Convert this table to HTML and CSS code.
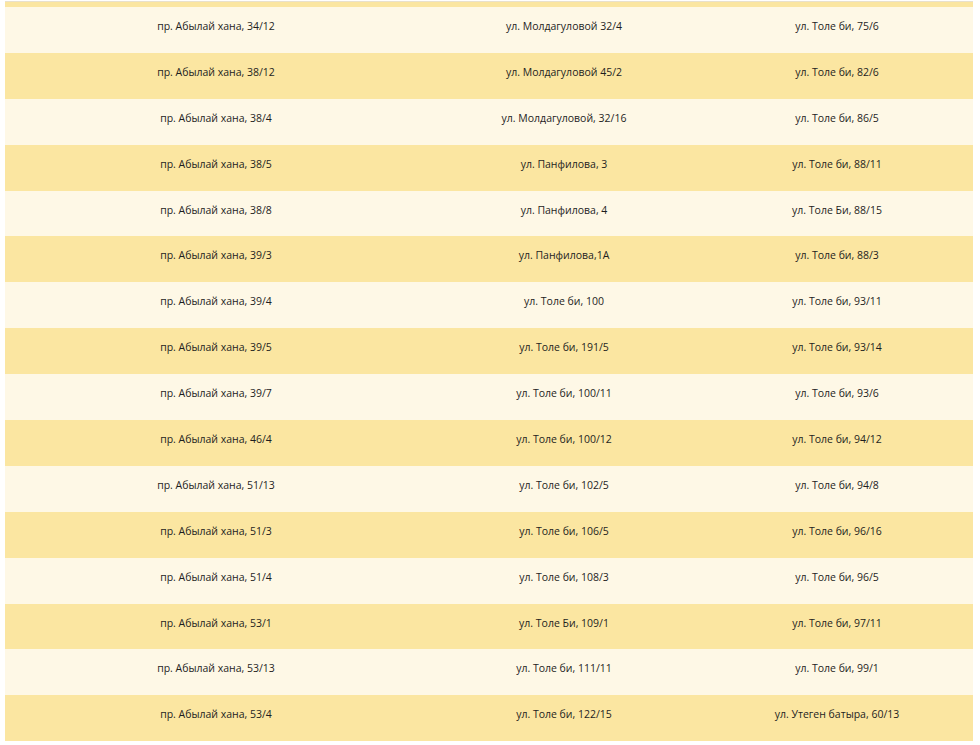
FILE: index.html
```html
<!DOCTYPE html>
<html lang="ru">
<head>
<meta charset="utf-8">
<title>Адреса</title>
<link rel="stylesheet" href="styles.css">
</head>
<body>
<div class="wrap">
  <div class="prev"></div>
  <table class="addr">
    <colgroup><col class="c1"><col class="c2"><col class="c3"></colgroup>
    <tbody>
      <tr><td>пр. Абылай хана, 34/12</td><td>ул. Молдагуловой 32/4</td><td>ул. Толе би, 75/6</td></tr>
      <tr><td>пр. Абылай хана, 38/12</td><td>ул. Молдагуловой 45/2</td><td>ул. Толе би, 82/6</td></tr>
      <tr><td>пр. Абылай хана, 38/4</td><td>ул. Молдагуловой, 32/16</td><td>ул. Толе би, 86/5</td></tr>
      <tr><td>пр. Абылай хана, 38/5</td><td>ул. Панфилова, 3</td><td>ул. Толе би, 88/11</td></tr>
      <tr><td>пр. Абылай хана, 38/8</td><td>ул. Панфилова, 4</td><td>ул. Толе Би, 88/15</td></tr>
      <tr><td>пр. Абылай хана, 39/3</td><td>ул. Панфилова,1А</td><td>ул. Толе би, 88/3</td></tr>
      <tr><td>пр. Абылай хана, 39/4</td><td>ул. Толе би, 100</td><td>ул. Толе би, 93/11</td></tr>
      <tr><td>пр. Абылай хана, 39/5</td><td>ул. Толе би, 191/5</td><td>ул. Толе би, 93/14</td></tr>
      <tr><td>пр. Абылай хана, 39/7</td><td>ул. Толе би, 100/11</td><td>ул. Толе би, 93/6</td></tr>
      <tr><td>пр. Абылай хана, 46/4</td><td>ул. Толе би, 100/12</td><td>ул. Толе би, 94/12</td></tr>
      <tr><td>пр. Абылай хана, 51/13</td><td>ул. Толе би, 102/5</td><td>ул. Толе би, 94/8</td></tr>
      <tr><td>пр. Абылай хана, 51/3</td><td>ул. Толе би, 106/5</td><td>ул. Толе би, 96/16</td></tr>
      <tr><td>пр. Абылай хана, 51/4</td><td>ул. Толе би, 108/3</td><td>ул. Толе би, 96/5</td></tr>
      <tr><td>пр. Абылай хана, 53/1</td><td>ул. Толе Би, 109/1</td><td>ул. Толе би, 97/11</td></tr>
      <tr><td>пр. Абылай хана, 53/13</td><td>ул. Толе би, 111/11</td><td>ул. Толе би, 99/1</td></tr>
      <tr><td>пр. Абылай хана, 53/4</td><td>ул. Толе би, 122/15</td><td>ул. Утеген батыра, 60/13</td></tr>
    </tbody>
  </table>
</div>
</body>
</html>
```
FILE: styles.css
```css
html, body {
  margin: 0;
  padding: 0;
  background: #ffffff;
}
body {
  font-family: "Open Sans", "Noto Sans", sans-serif;
  font-size: 10.5px;
  color: #1e1e1e;
}
.wrap {
  margin-top: 1px;
  border-top: 1px solid #e9e1cc;
  margin-left: 5px;
  width: 968px;
}
.prev {
  height: 5px;
  background: #fbe6a1;
}
.addr {
  width: 968px;
  border-collapse: collapse;
  table-layout: fixed;
}
.c1 { width: 422px; }
.c2 { width: 274px; }
.c3 { width: 272px; }
.addr td {
  height: 45.9px;
  padding: 0 0 8px 0;
  text-align: center;
  vertical-align: middle;
  box-sizing: border-box;
}
.addr tr:nth-child(odd) { background: #fef8e6; }
.addr tr:nth-child(even) { background: #fbe6a1; }
```
